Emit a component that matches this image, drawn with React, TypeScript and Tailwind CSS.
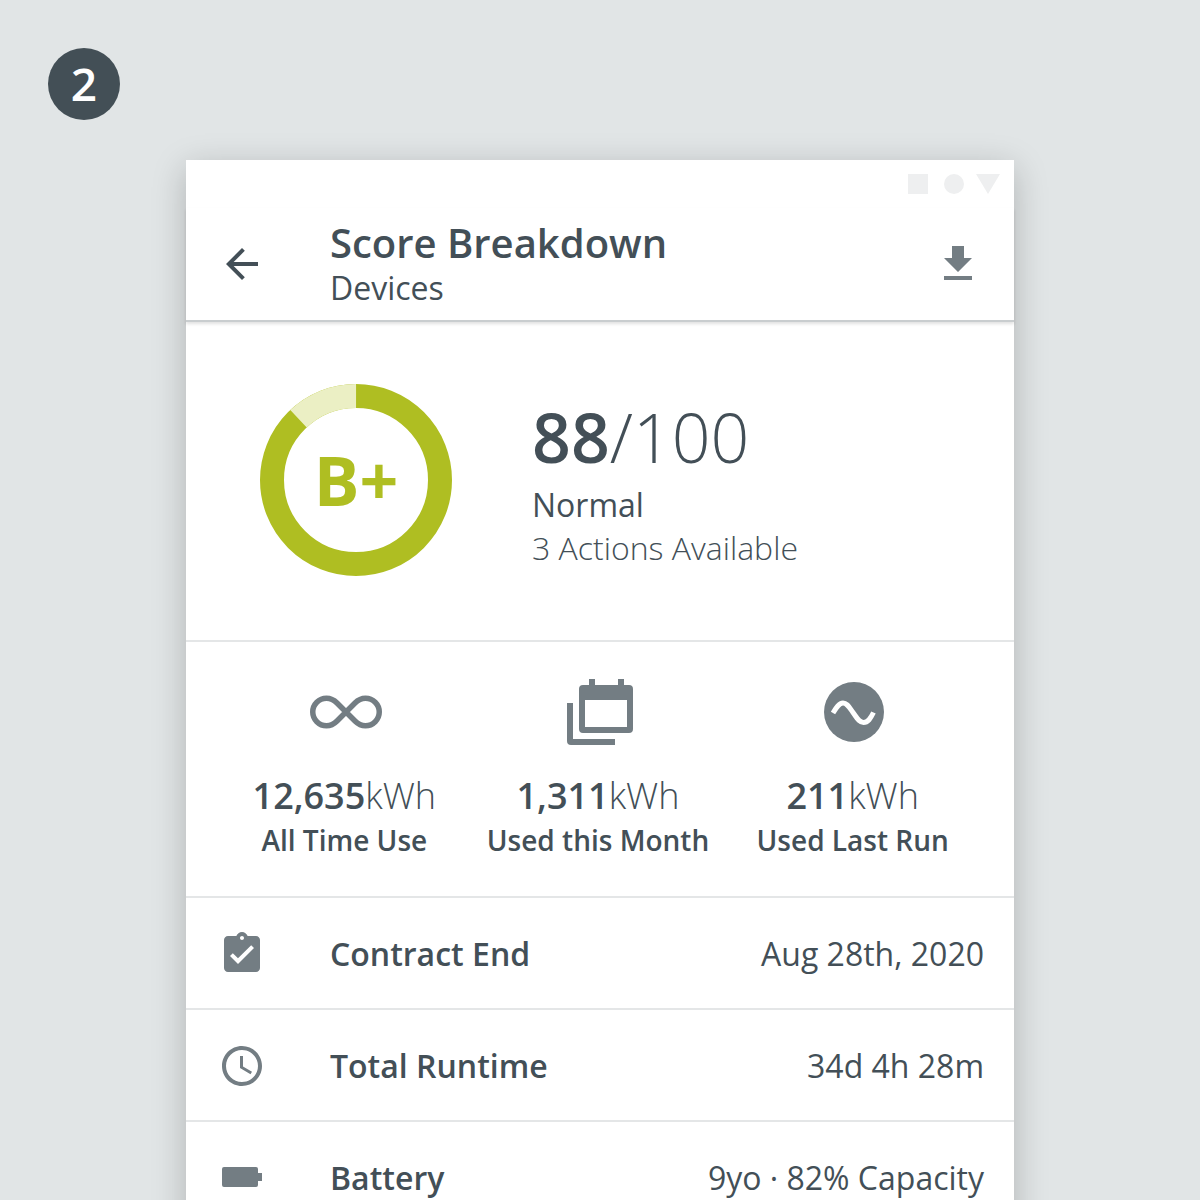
const ICON = '#737d83';

function InfinityIcon() {
  return (
    <svg className="ml-[4px]" width="72" height="72" viewBox="0 0 72 72" fill="none" stroke={ICON} strokeWidth="5.5">
      <path d="M36 36L45 27C48 24 51.5 22.25 55.5 22.25C63 22.25 69.25 28.5 69.25 36C69.25 43.5 63 49.75 55.5 49.75C51.5 49.75 48 48 45 45L27 27C24 24 20.5 22.25 16.5 22.25C9 22.25 2.75 28.5 2.75 36C2.75 43.5 9 49.75 16.5 49.75C20.5 49.75 24 48 27 45Z" />
    </svg>
  );
}

function CalendarIcon() {
  return (
    <svg width="72" height="72" viewBox="0 0 72 72" fill={ICON}>
      <path fillRule="evenodd" d="M27 3h6v6h23V3h6v6h5a4 4 0 0 1 4 4v40a4 4 0 0 1-4 4H21a4 4 0 0 1-4-4V13a4 4 0 0 1 4-4h6zM23 24v27h42V24z" />
      <path d="M5 27h6v36h42v6H9a4 4 0 0 1-4-4z" />
    </svg>
  );
}

function WaveIcon() {
  return (
    <svg className="ml-[2px]" width="72" height="72" viewBox="0 0 72 72">
      <circle cx="36" cy="36" r="30" fill={ICON} />
      <path d="M15 37c3-5 6-10 10-10s6 4 10 9.5 6 10 10.5 10 7-4 10-10" fill="none" stroke="#fff" strokeWidth="5" />
    </svg>
  );
}

function Stat({ icon, value, label, className }: { icon: React.ReactNode; value: string; label: string; className: string }) {
  return (
    <div className={className}>
      {icon}
      <div className="mt-[24px] text-[36px] leading-[48px] whitespace-nowrap">
        <span className="font-semibold">{value}</span>
        <span className="font-light">kWh</span>
      </div>
      <div className="mt-[2px] text-[28px] leading-[36px] font-semibold whitespace-nowrap">{label}</div>
    </div>
  );
}

function Row({ icon, label, value }: { icon: React.ReactNode; label: string; value: string }) {
  return (
    <div className="h-[112px] flex items-center border-t-2 border-[#e4e6e7] pt-[2px] pl-[32px] pr-[30px]">
      <div className="w-[48px] h-[48px] flex-none">{icon}</div>
      <div className="ml-[64px] text-[32px] font-semibold">{label}</div>
      <div className="ml-auto text-[32px]">{value}</div>
    </div>
  );
}

export default function App() {
  return (
    <div
      className="h-[1200px] overflow-hidden bg-[#e1e5e6] pt-[48px] pl-[48px] text-[#434f57]"
      style={{ fontFamily: '"Open Sans", sans-serif' }}
    >
      <div className="w-[72px] h-[72px] pb-[2px] rounded-full bg-[#434f56] text-white text-[46px] font-semibold flex items-center justify-center">2</div>

      <div className="ml-[138px] mt-[40px] w-[828px] bg-white shadow-[0_8px_32px_rgba(0,0,0,0.22)]">
        {/* status bar */}
        <div className="h-[48px] flex items-start justify-end pt-[14px] pr-[14px]">
          <div className="w-[20px] h-[20px] bg-[#eeeff0]" />
          <div className="ml-[16px] w-[20px] h-[20px] rounded-full bg-[#eeeff0]" />
          <svg className="ml-[12px]" width="24" height="20" viewBox="0 0 24 20"><path d="M0 0h24L12 20z" fill="#eeeff0" /></svg>
        </div>

        {/* header */}
        <div className="h-[114px] flex items-start border-b-2 border-[#c9cdcf] shadow-[0_2px_3px_rgba(0,0,0,0.12)] relative pl-[32px] pr-[32px]">
          <svg className="mt-[32px] flex-none" width="48" height="48" viewBox="0 0 24 24" fill="#434f57">
            <path d="M20 11H7.83l5.59-5.59L12 4l-8 8 8 8 1.41-1.41L7.83 13H20v-2z" />
          </svg>
          <div className="ml-[64px]">
            <div className="text-[40px] leading-[52px] mt-[9px] font-semibold">Score Breakdown</div>
            <div className="text-[32px] leading-[38px]">Devices</div>
          </div>
          <svg className="mt-[32px] ml-auto flex-none" width="48" height="48" viewBox="0 0 24 24" fill={ICON}>
            <path d="M19 9h-4V3H9v6H5l7 7 7-7zM5 18v2h14v-2H5z" />
          </svg>
        </div>

        {/* score */}
        <div className="h-[318px] flex items-center pl-[74px] pb-[2px]">
          <div className="relative w-[192px] h-[192px] flex-none">
            <svg width="192" height="192" viewBox="0 0 192 192">
              <circle cx="96" cy="96" r="84" fill="none" stroke="#afbe22" strokeWidth="24" />
              <circle cx="96" cy="96" r="84" fill="none" stroke="#ebefc4" strokeWidth="24" strokeDasharray="63.3 464.5" transform="rotate(-133.2 96 96)" />
            </svg>
            <div className="absolute inset-0 flex items-center justify-center text-[#afbe22] text-[68px] font-bold">B+</div>
          </div>
          <div className="ml-[80px] pt-[5px]">
            <div className="text-[68px] leading-[84px]">
              <span className="font-semibold">88</span>
              <span className="font-light">/100</span>
            </div>
            <div className="text-[32px] leading-[43px] mt-[4px]">Normal</div>
            <div className="text-[32px] leading-[44px] font-light">3 Actions Available</div>
          </div>
        </div>

        {/* stats */}
        <div className="h-[256px] border-t-2 border-[#e4e6e7] grid grid-cols-3 pl-[30px] pr-[34px] pt-[34px]">
          <Stat className="flex flex-col items-center ml-[2px]" icon={<InfinityIcon />} value="12,635" label="All Time Use" />
          <Stat className="flex flex-col items-center" icon={<CalendarIcon />} value="1,311" label="Used this Month" />
          <Stat className="flex flex-col items-center" icon={<WaveIcon />} value="211" label="Used Last Run" />
        </div>

        <Row
          label="Contract End"
          value="Aug 28th, 2020"
          icon={
            <svg width="48" height="48" viewBox="0 0 24 24" fill={ICON}>
              <path d="M19 3h-4.18C14.4 1.84 13.3 1 12 1c-1.3 0-2.4.84-2.82 2H5c-1.1 0-2 .9-2 2v14c0 1.1.9 2 2 2h14c1.1 0 2-.9 2-2V5c0-1.1-.9-2-2-2zm-7 0c.55 0 1 .45 1 1s-.45 1-1 1-1-.45-1-1 .45-1 1-1zm-2 14l-4-4 1.41-1.41L10 14.17l6.59-6.59L18 9l-8 8z" />
            </svg>
          }
        />
        <Row
          label="Total Runtime"
          value="34d 4h 28m"
          icon={
            <svg width="48" height="48" viewBox="0 0 24 24" fill={ICON}>
              <path d="M11.99 2C6.47 2 2 6.48 2 12s4.47 10 9.99 10C17.52 22 22 17.52 22 12S17.52 2 11.99 2zM12 20c-4.42 0-8-3.58-8-8s3.58-8 8-8 8 3.58 8 8-3.58 8-8 8zm.5-13H11v6l5.25 3.15.75-1.23-4.5-2.67z" />
            </svg>
          }
        />
        <Row
          label="Battery"
          value="9yo · 82% Capacity"
          icon={
            <svg width="48" height="48" viewBox="0 0 48 48" fill={ICON}>
              <path d="M6 13h32a2 2 0 0 1 2 2v4h4v8h-4v4a2 2 0 0 1-2 2H6a2 2 0 0 1-2-2V15a2 2 0 0 1 2-2z" />
            </svg>
          }
        />
      </div>
    </div>
  );
}
